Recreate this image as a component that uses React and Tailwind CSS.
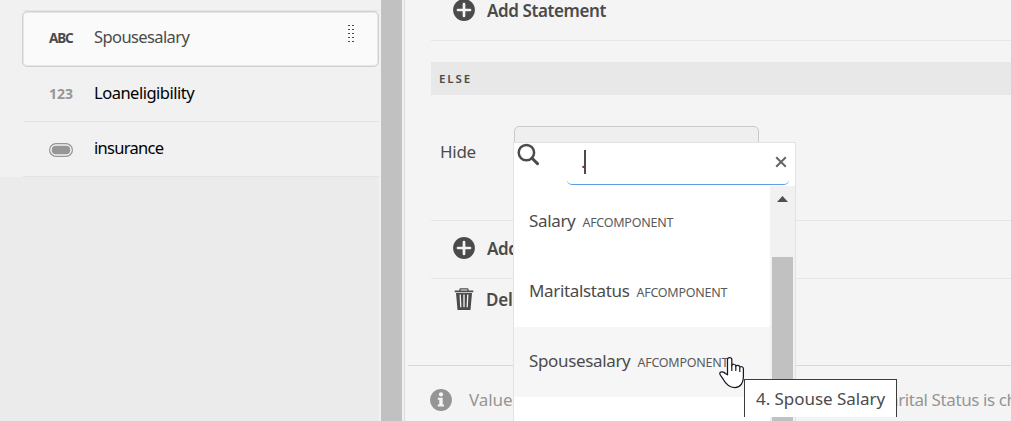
import React from 'react';

const PlusCircle = () => (
  <svg width="22" height="22" viewBox="0 0 22 22" className="shrink-0">
    <circle cx="11" cy="11" r="10.9" fill="#4b4b4b" />
    <path d="M11 5v12M5 11h12" stroke="#f4f4f4" strokeWidth="2.7" strokeLinecap="round" />
  </svg>
);

const Trash = () => (
  <svg width="20" height="22" viewBox="0 0 20 22" className="shrink-0">
    <path d="M6 3V1.6Q6 .8 6.8 .8h6.4q.8 0 .8.8V3" fill="none" stroke="#4b4b4b" strokeWidth="1.3" />
    <path d="M.7 2.5h18.6v1.8H.7zM2 5h16L16.5 22h-13z" fill="#4b4b4b" />
    <path d="M6.2 6.5l.6 12.7M10 6.5v12.7M13.8 6.5l-.6 12.7" stroke="#f4f4f4" strokeWidth="1.3" />
  </svg>
);

const Info = () => (
  <svg width="22" height="22" viewBox="0 0 22 22" className="shrink-0">
    <circle cx="11" cy="11" r="10.9" fill="#959595" />
    <circle cx="11" cy="5.4" r="2.1" fill="#f4f4f4" />
    <path d="M7.8 8.8h4.9v6.8H14v2H7.8v-2h1.5v-4.8H7.8z" fill="#f4f4f4" />
  </svg>
);

const Hand = () => (
  <svg width="26" height="33" viewBox="0 0 26 33" className="absolute left-[719px] top-[356px]">
    <path
      d="M8.5 18.8V3.4C8.5.9 12.8.9 12.8 3.4v6.3c0-2 3.8-2 4 .4 1-1.3 3.8-.9 4 1.1 1-1.1 3.6-.6 3.6 1.6v8.3c0 5.5-2.8 10.4-8.5 10.4-5.8 0-9.2-3.5-11.7-8.2C2.7 20.6.5 19 .8 17.2c.3-2.1 4.1-1.5 5.6.3z"
      fill="#fff" stroke="#17172a" strokeWidth="1.25" strokeLinejoin="round"
    />
    <path d="M12.8 9v6M16.8 10v5M20.8 11.5V16" stroke="#17172a" strokeWidth="1.2" fill="none" />
  </svg>
);

function Option({ name, active }) {
  return (
    <div className={'flex h-[70px] shrink-0 items-baseline pl-[15px] pt-[21px] ' + (active ? 'bg-[#f6f6f6]' : 'bg-white')}>
      <span className="text-[17px] leading-[26px] tracking-[-0.35px] text-[#4b4b4b]">{name}</span>
      <span className="ml-[7px] text-[12.5px] leading-[20px] tracking-[-0.25px] text-[#5a5a5a]">AFCOMPONENT</span>
    </div>
  );
}

export default function App() {
  return (
    <div className="relative flex h-[421px] w-[1011px] overflow-hidden bg-[#f4f4f4] font-['Noto_Sans',sans-serif] whitespace-nowrap text-[#4b4b4b]">
      <aside className="w-[379px] shrink-0 bg-[#ebebeb]">
        <div className="h-[177px] bg-[#f1f1f1] pl-[22px] pt-[10px]">
          <div className="ml-px h-px bg-[#e6e6e6]" />
          <div className="relative flex h-[56px] items-start rounded-[5px] border border-[#d0d0d0] bg-[#fafafa] pl-[26px] shadow-[inset_0_0_0_1px_#e6e6e6]">
            <span className="mt-[16px] w-[45px] text-[13.5px] leading-[20px] font-bold tracking-[-1.1px]">ABC</span>
            <span className="mt-[13px] text-[16.5px] leading-[24px] tracking-[-0.6px]">Spousesalary</span>
            <svg width="8" height="20" viewBox="0 0 8 20" className="mt-[12px] ml-auto mr-[23px]">
              {[0, 4, 8, 12, 16].map((y) => (
                <path key={y} d={`M1 ${y + 1.5}h2M5 ${y + 1.5}h2`} stroke="#4b4b4b" />
              ))}
            </svg>
          </div>
          <div className="ml-px flex h-[55px] items-start border-b border-[#e4e4e4] pl-[26px]">
            <span className="mt-[17px] w-[45px] text-[14px] leading-[20px] font-bold text-[#969696]">123</span>
            <span className="mt-[14px] text-[16.5px] leading-[24px] tracking-[-0.5px] text-black">Loaneligibility</span>
          </div>
          <div className="ml-px flex h-[55px] items-start border-b border-[#e4e4e4] pl-[26px]">
            <svg width="24" height="14" viewBox="0 0 24 14" className="mr-[21px] mt-[21px]">
              <rect x=".6" y=".6" width="22.8" height="12.8" rx="6.4" fill="none" stroke="#969696" strokeWidth="1.2" />
              <rect x="2.8" y="2.8" width="18.4" height="8.4" rx="4" fill="#969696" />
            </svg>
            <span className="mt-[14px] text-[16.5px] leading-[24px] tracking-[-0.7px] text-black">insurance</span>
          </div>
        </div>
      </aside>
      <div className="w-[2px] shrink-0 bg-[#f1f1f1]" />
      <div className="w-[21px] shrink-0 bg-[#c1c1c1]" />
      <div className="w-[2px] shrink-0 bg-[#f1f1f1]" />
      <main className="flex-1 border-l border-[#dcdcdc] pl-[3px]">
        <div className="h-[365px] pl-[23px]">
          <div className="flex h-[41px] items-start border-b border-[#e6e6e6] pl-[22px]">
            <div className="-mt-px"><PlusCircle /></div>
            <span className="ml-[12px] -mt-[2px] text-[17px] leading-[26px] font-semibold tracking-[-0.4px]">Add Statement</span>
          </div>
          <div className="mt-[21px] flex h-[33px] items-center bg-[#e8e8e8] pl-[8px]">
            <span className="text-[11.5px] font-semibold tracking-[1.9px]">ELSE</span>
          </div>
          <div className="flex h-[126px] items-start border-b border-[#e6e6e6] pl-[9px] pt-[31px]">
            <span className="mt-[13px] w-[74px] text-[17px] leading-[26px] tracking-[-0.3px]">Hide</span>
            <div className="h-[48px] w-[245px] rounded-[5px] border border-[#cacaca] bg-[#efefef]" />
          </div>
          <div className="flex h-[58px] items-start border-b border-[#e6e6e6] pl-[22px] pt-[16px]">
            <PlusCircle />
            <span className="ml-[12px] -mt-px w-[26px] overflow-hidden text-[17px] leading-[26px] font-semibold tracking-[-0.4px]">Add</span>
          </div>
          <div className="flex items-start pl-[23px] pt-[9px]">
            <Trash />
            <span className="ml-[12px] -mt-px text-[17px] leading-[26px] font-semibold tracking-[-0.2px]">Del</span>
          </div>
        </div>
        <div className="flex items-start border-t border-[#d8d8d8] pl-[22px] pt-[23px] text-[17px] leading-[26px] text-[#959595]">
          <Info />
          <span className="ml-[17px] -mt-[2px] w-[420px] tracking-[-0.1px]">Value</span>
          <span className="-mt-[2px] tracking-[-0.4px]">arital Status is ch</span>
        </div>
      </main>

      <div className="absolute left-[513px] top-[142px] h-[300px] w-[283px] border border-[#e3e3e3] bg-white">
        <div className="flex h-[43px] items-start">
          <svg width="24" height="24" viewBox="0 0 24 24" className="ml-[2px] mt-0">
            <circle cx="10.4" cy="9.6" r="7.7" fill="none" stroke="#4b4b4b" strokeWidth="2.5" />
            <path d="M16 15.2l5.5 5.4" stroke="#4b4b4b" strokeWidth="3" strokeLinecap="round" />
          </svg>
          <div className="ml-[27px] flex h-[42px] w-[222px] items-start rounded-b-[5px] border-b-[1.5px] border-[#5c9eea] pl-[14px]">
            <span className="mt-[6px] w-[4px] text-[17px] leading-[26px]">.</span>
            <div className="-ml-[1px] mt-[7px] h-[24px] w-[2px] bg-[#4b4b4b]" />
            <svg width="12" height="12" viewBox="0 0 12 12" className="ml-auto mr-[2px] mt-[13px]">
              <path d="M1.2 1.2l9.6 9.6M10.8 1.2l-9.6 9.6" stroke="#666" strokeWidth="2" />
            </svg>
          </div>
        </div>
        <div className="flex h-[256px]">
          <div className="flex w-[256px] flex-col overflow-hidden pt-px">
            <Option name="Salary" />
            <Option name="Maritalstatus" />
            <Option name="Spousesalary" active />
          </div>
          <div className="w-[25px] bg-[#f1f1f1] pl-[2px]">
            <svg width="21" height="71" viewBox="0 0 21 71" className="block"><path d="M5 16l5.5-6 5.5 6z" fill="#505050" /></svg>
            <div className="h-[185px] w-[21px] bg-[#c1c1c1]" />
          </div>
        </div>
      </div>
      <div className="absolute left-[744px] top-[379px] h-[38px] w-[153px] border border-b-0 border-[#3c3c3c] bg-white pl-[11px] pt-[6px] text-[17px] leading-[26px] tracking-[-0.05px]">4. Spouse Salary</div>
      <Hand />
    </div>
  );
}
